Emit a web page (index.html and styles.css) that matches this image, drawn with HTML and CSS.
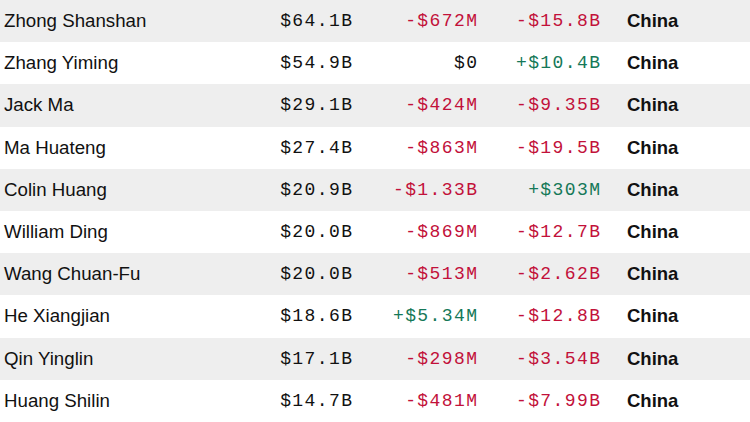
FILE: index.html
```html
<!DOCTYPE html>
<html>
<head>
<meta charset="utf-8">
<link rel="stylesheet" href="styles.css">
</head>
<body>
<div class="table">
  <div class="row"><div class="name">Zhong Shanshan</div><div class="num">$64.1B</div><div class="num neg">-$672M</div><div class="num neg">-$15.8B</div><div class="country">China</div></div>
  <div class="row"><div class="name">Zhang Yiming</div><div class="num">$54.9B</div><div class="num">$0</div><div class="num pos">+$10.4B</div><div class="country">China</div></div>
  <div class="row"><div class="name">Jack Ma</div><div class="num">$29.1B</div><div class="num neg">-$424M</div><div class="num neg">-$9.35B</div><div class="country">China</div></div>
  <div class="row"><div class="name">Ma Huateng</div><div class="num">$27.4B</div><div class="num neg">-$863M</div><div class="num neg">-$19.5B</div><div class="country">China</div></div>
  <div class="row"><div class="name">Colin Huang</div><div class="num">$20.9B</div><div class="num neg">-$1.33B</div><div class="num pos">+$303M</div><div class="country">China</div></div>
  <div class="row"><div class="name">William Ding</div><div class="num">$20.0B</div><div class="num neg">-$869M</div><div class="num neg">-$12.7B</div><div class="country">China</div></div>
  <div class="row"><div class="name">Wang Chuan-Fu</div><div class="num">$20.0B</div><div class="num neg">-$513M</div><div class="num neg">-$2.62B</div><div class="country">China</div></div>
  <div class="row"><div class="name">He Xiangjian</div><div class="num">$18.6B</div><div class="num pos">+$5.34M</div><div class="num neg">-$12.8B</div><div class="country">China</div></div>
  <div class="row"><div class="name">Qin Yinglin</div><div class="num">$17.1B</div><div class="num neg">-$298M</div><div class="num neg">-$3.54B</div><div class="country">China</div></div>
  <div class="row"><div class="name">Huang Shilin</div><div class="num">$14.7B</div><div class="num neg">-$481M</div><div class="num neg">-$7.99B</div><div class="country">China</div></div>
</div>
</body>
</html>
```
FILE: styles.css
```css
html, body {
  margin: 0;
  padding: 0;
  background: #ffffff;
}
.table {
  width: 750px;
  display: flex;
  flex-direction: column;
}
.row {
  height: 42.2px;
  display: grid;
  grid-template-columns: 240px 112px 125px 123px 1fr;
  align-items: center;
  color: #111111;
}
.row:nth-child(odd) {
  background: #eeeeee;
}
.name {
  padding-left: 4px;
  font-family: "Liberation Sans", Arial, sans-serif;
  font-size: 18.7px;
}
.num {
  text-align: right;
  font-family: "Liberation Mono", "Courier New", monospace;
  font-size: 18px;
  letter-spacing: 1.4px;
  margin-right: -1.4px;
}
.neg {
  color: #c2113a;
}
.pos {
  color: #157858;
}
.country {
  padding-left: 27px;
  font-family: "Liberation Sans", Arial, sans-serif;
  font-size: 18.5px;
  font-weight: bold;
}
```
